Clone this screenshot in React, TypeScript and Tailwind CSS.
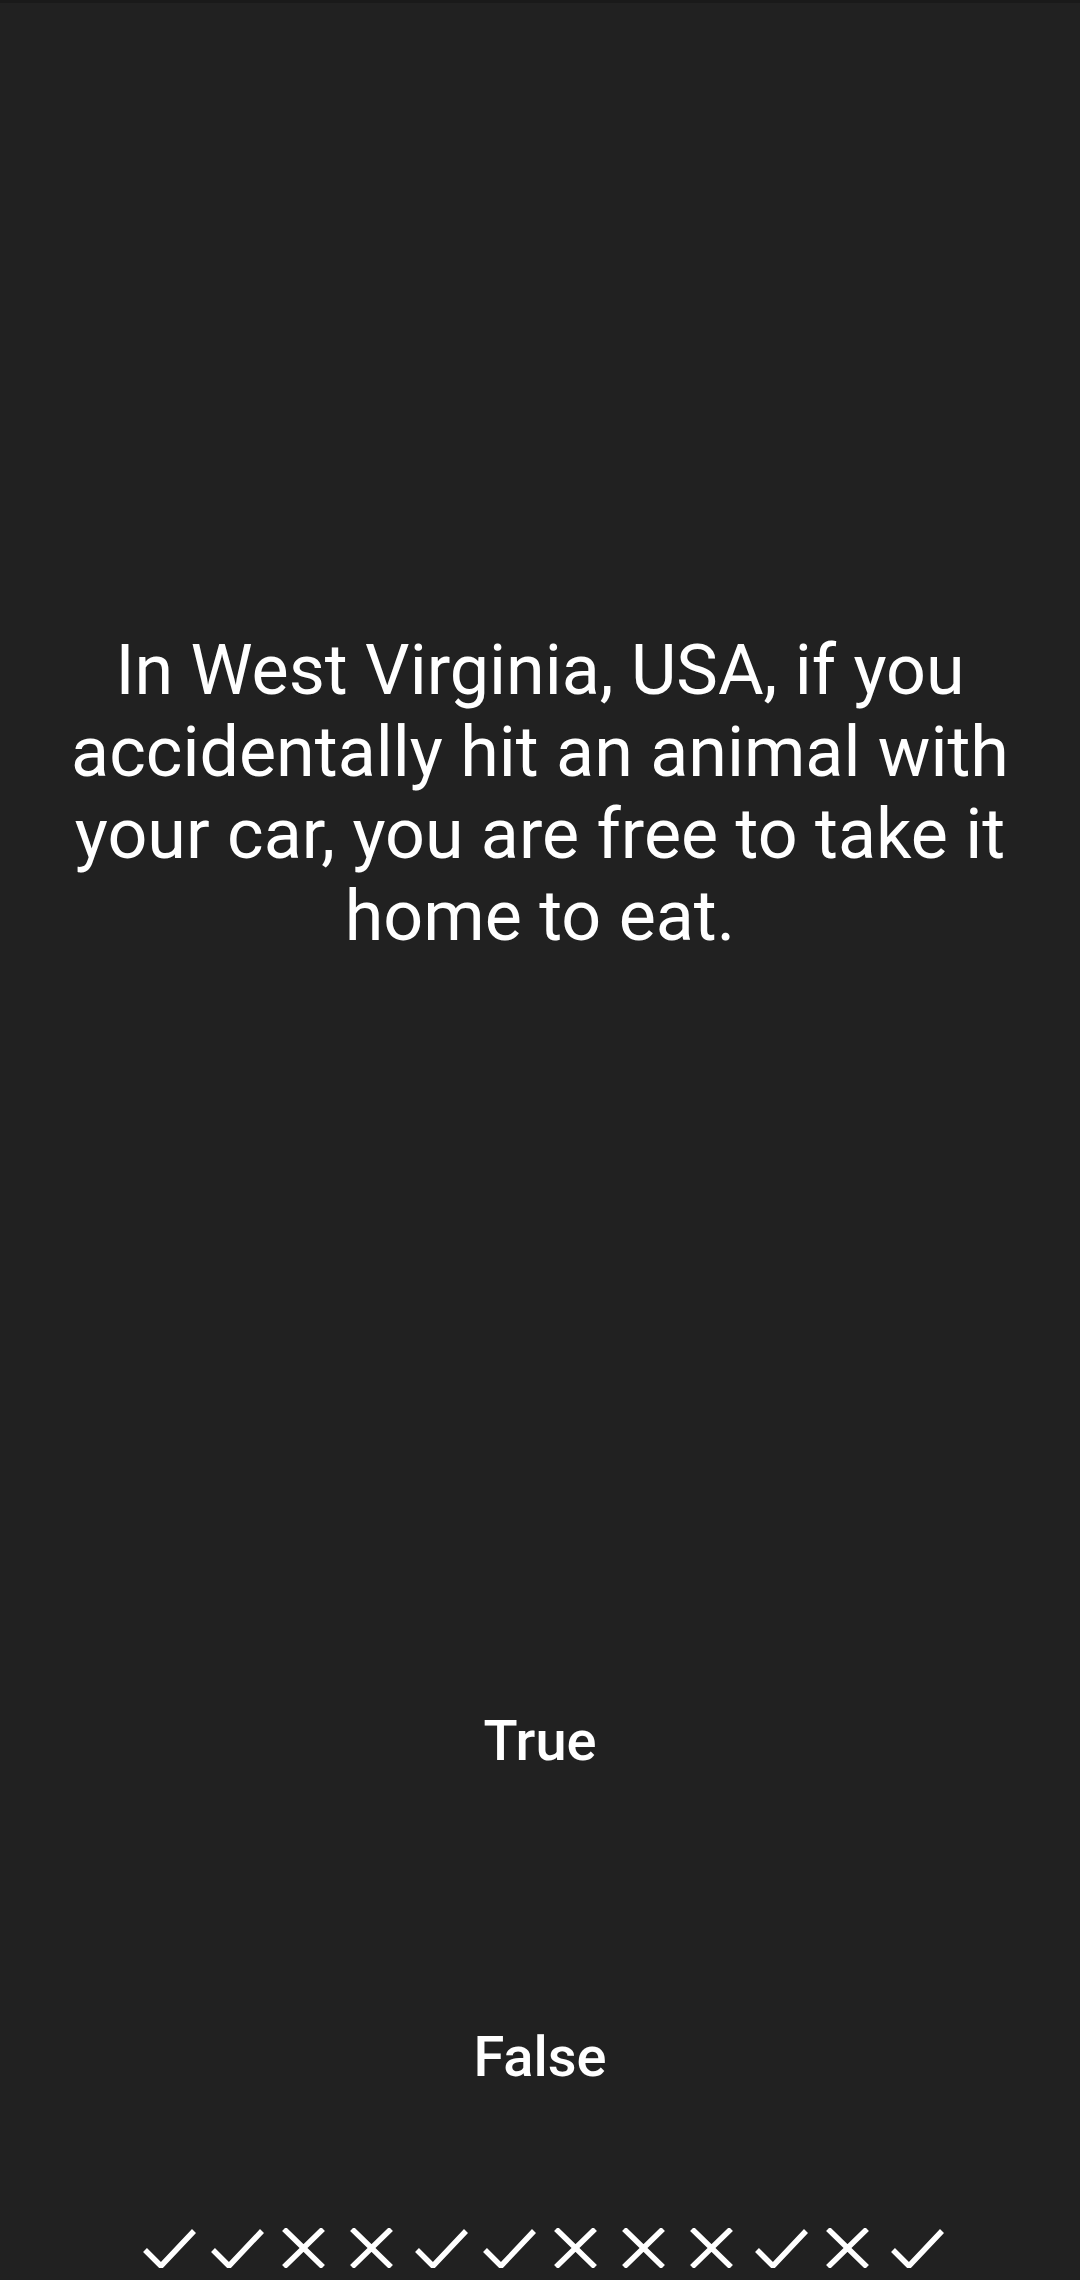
import React from "react";

const results = [true, true, false, false, true, true, false, false, false, true, false, true];

function Mark({ ok }: { ok: boolean }) {
  return (
    <svg width="68" height="40" viewBox="0 0 68 40" fill="none" stroke="white" strokeWidth="5.5">
      {ok ? <path d="M13 22 L29 38 L62 3" /> : <path d="M16 1 L55 39 M55 1 L16 39" />}
    </svg>
  );
}

export default function App() {
  return (
    <div className="flex h-[2280px] w-[1080px] flex-col bg-[#212121] font-['Roboto',sans-serif] text-white">
      <div className="h-[3px] bg-[#1a1a1a]" />
      <div className="flex flex-1 items-center justify-center px-[60px]">
        <p className="text-center text-[70px] leading-[82px]">
          In West Virginia, USA, if you accidentally hit an animal with your car, you are free to take it home to eat.
        </p>
      </div>
      <button className="flex h-[316px] items-center justify-center text-[56px] font-medium">True</button>
      <button className="flex h-[316px] items-center justify-center text-[56px] font-medium">False</button>
      <div className="flex h-[65px] items-center justify-center">
        {results.map((r, i) => (
          <Mark key={i} ok={r} />
        ))}
      </div>
    </div>
  );
}
